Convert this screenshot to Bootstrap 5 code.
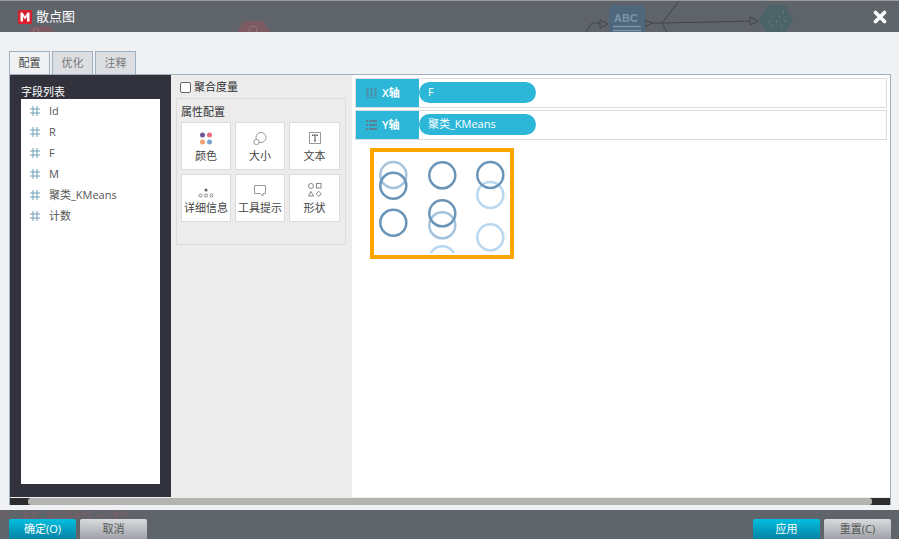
<!DOCTYPE html>
<html>
  <head>
    <title>散点图</title>
    <link href="https://cdn.jsdelivr.net/npm/bootstrap@5.3.2/dist/css/bootstrap.min.css" rel="stylesheet">
    <style>
      html, body { height: 539px; overflow: hidden; }
      body { font-family: "Open Sans", "Noto Sans CJK SC", sans-serif; font-size: 11px; color: #333; background: #5f646b; }
      .dlg { width: 899px; height: 539px; }
      .dlg-head { height: 32px; background: #5f646b; border-top: 1px solid #9a9b9c; color: #fff; font-size: 13px; position: relative; overflow: hidden; padding-left: 18px; }
      .dlg-logo { width: 14px; height: 14px; margin-right: 4px; }
      .dlg-close { position: absolute; right: 12px; top: 9px; }
      .bg-flow { position: absolute; left: 0; top: 0; }
      .bg-flow text { font-family: "Liberation Sans", sans-serif; font-size: 11px; font-weight: 700; fill: #7d95a6; }
      .dlg-body { height: 478px; background: #f0f1f3; padding: 19px 8px 5px 9px; }
      .tab-row { height: 23px; gap: 2px; }
      .tab-item { width: 41px; height: 23px; border: 1px solid #9fb0c0; border-bottom: 0; background: #dcdee2; color: #777; text-align: center; line-height: 22px; }
      .tab-item.on { background: #f0f1f3; color: #444; }
      .tab-panel { height: 431px; border: 1px solid #9fb0c0; background: #fff; }
      .panel-main { height: 422px; }
      .field-side { width: 161px; background: #32323c; padding: 0 11px 13px 11px; }
      .field-title { color: #fff; height: 24px; padding-top: 9px; line-height: 15px; }
      .field-list { background: #fff; padding-top: 1px; }
      .field-row { height: 21px; line-height: 21px; color: #555; padding-left: 9px; gap: 9px; }
      .field-row svg { flex: none; }
      .attr-side { width: 181px; background: #ececec; padding: 0 6px 0 5px; }
      .agg-line { height: 23px; gap: 3px; color: #333; padding-top: 2px; }
      .agg-box { width: 11px; height: 11px; border: 1px solid #666; border-radius: 2px; background: #fff; margin-left: 4px; }
      .attr-box { height: 147px; border: 1px solid #dcdcdc; padding: 4px 4px 0 4px; }
      .attr-title { height: 19px; line-height: 18px; }
      .attr-grid { display: grid; grid-template-columns: 50px 50px 51px; column-gap: 4px; row-gap: 4px; }
      .attr-btn { height: 48px; background: #fff; border: 1px solid #dcdcdc; gap: 2px; white-space: nowrap; color: #444; padding-top: 2px; }
      .attr-btn svg { height: 16px; }
      .chart-side { flex: 1; padding: 3px 3px 0 3px; min-width: 0; }
      .axis-row { height: 30px; border: 1px solid #dcdcdc; margin-bottom: 2px; }
      .axis-tag { width: 63px; height: 28px; background: #2cb6d8; color: #fff; padding-left: 10px; gap: 5px; font-weight: 600; }
      .axis-pill { width: 117px; height: 21px; border-radius: 11px; background: #2cb6d8; color: #fff; padding-left: 9px; line-height: 20px; margin-top: 3px; }
      .plot-frame { width: 144px; height: 111px; border: 4px solid #ffa500; margin: 8px 0 0 15px; overflow: hidden; }
      .scroll-track { height: 8px; background: #2d2d30; padding: 0 18px 0 18px; border-top: 1px solid #eee; }
      .scroll-thumb { height: 7px; background: #b3b3b0; border-radius: 3px; }
      .dlg-foot { height: 29px; background: #5f646b; padding: 9px 8px 0 9px; position: relative; }
      .foot-ghost { position: absolute; left: 0; top: 0; color: #7c5f66; font-size: 9px; line-height: 9px; white-space: nowrap; }
      .act-btn { position: relative; width: 67px; height: 20px; border: 0; border-radius: 2px 2px 0 0; font-size: 11px; line-height: 20px; text-align: center; padding: 0; }
      .act-blue { background: linear-gradient(#03bfe0, #0583a4); color: #fff; }
      .act-gray { background: linear-gradient(#d9dadd, #9ea2a8); color: #555; }
    </style>
  </head>
  <body>
    <div class="dlg d-flex flex-column">
      <div class="dlg-head d-flex align-items-center">
        <svg class="bg-flow" width="899" height="32" viewBox="0 0 899 32">
          <path d="M585 32l7-10h8M645 22h17l5 10M662 22l17-22M662 22l94-2" fill="none" stroke="#41454b" stroke-width="1"/>
          <path d="M600 19l8 4-8 4zM645 19l7 3-7 4zM750 16l8 4-8 4z" fill="#5f646b" stroke="#41454b"/>
          <rect x="609" y="4" width="36" height="30" rx="4" fill="#4e677c"/>
          <text x="614" y="21">ABC</text>
          <path d="M613 25.500h28M613 29.500h28" stroke="#7d95a6" stroke-width="1.500"/>
          <path d="M759 18l9-14h17l8 14-8 16h-17z" fill="#4c6468"/>
          <path d="M783 11h1M772 15h1M779 16h1M769 21h1M776 21h1M785 20h1M771 25h1M781 25h1" stroke="#6f8789" stroke-width="1.500"/>
          <path d="M27 32l6-7h16l6 7zM236 32l8-12h19l8 12z" fill="#7b5a61"/>
          <circle cx="36" cy="30" r="3" fill="none" stroke="#93757b"/>
          <circle cx="253" cy="29" r="4" fill="none" stroke="#93757b"/>
        </svg>
        <svg class="dlg-logo position-relative" viewBox="0 0 14 14"><rect width="14" height="14" rx="1.500" fill="#d8202f"/><path d="M2.500 11.500V2.500h2l2.500 4 2.500-4h2v9H9V6.500L7 9.500 5 6.500v5z" fill="#fff"/></svg>
        <span class="position-relative">散点图</span>
        <svg class="dlg-close" width="14" height="14" viewBox="0 0 14 14"><path d="M2.500 2.500l9 9M11.500 2.500l-9 9" stroke="#fff" stroke-width="3.600" stroke-linecap="round"/></svg>
      </div>
      <div class="dlg-body">
        <div class="tab-row d-flex">
          <div class="tab-item on">配置</div>
          <div class="tab-item">优化</div>
          <div class="tab-item">注释</div>
        </div>
        <div class="tab-panel">
          <div class="panel-main d-flex">
            <div class="field-side d-flex flex-column">
              <div class="field-title">字段列表</div>
              <div class="field-list flex-grow-1" id="fieldList"></div>
            </div>
            <div class="attr-side">
              <div class="agg-line d-flex align-items-center"><span class="agg-box"></span><span>聚合度量</span></div>
              <div class="attr-box">
                <div class="attr-title">属性配置</div>
                <div class="attr-grid">
                  <div class="attr-btn d-flex flex-column align-items-center justify-content-center">
                    <svg width="16" viewBox="0 0 16 16"><circle cx="4.500" cy="5" r="2.500" fill="#6f5b93"/><circle cx="11.500" cy="5" r="2.500" fill="#f06a80"/><circle cx="4.500" cy="12" r="2.500" fill="#f0a070"/><circle cx="11.500" cy="12" r="2.500" fill="#7aa5d2"/></svg>
                    <span>颜色</span>
                  </div>
                  <div class="attr-btn d-flex flex-column align-items-center justify-content-center">
                    <svg width="16" viewBox="0 0 16 16"><circle cx="9" cy="7.500" r="5" fill="#fff" stroke="#999"/><circle cx="4.500" cy="12" r="2.700" fill="#fff" stroke="#999"/></svg>
                    <span>大小</span>
                  </div>
                  <div class="attr-btn d-flex flex-column align-items-center justify-content-center">
                    <svg width="16" viewBox="0 0 16 16"><rect x="2.500" y="2.500" width="11" height="11" fill="#fff" stroke="#999"/><path d="M5.500 6V5h5v1M8 5v6M7 11h2" fill="none" stroke="#555"/></svg>
                    <span>文本</span>
                  </div>
                  <div class="attr-btn d-flex flex-column align-items-center justify-content-center">
                    <svg width="16" viewBox="0 0 16 16"><circle cx="8" cy="8" r="1.600" fill="#666"/><circle cx="2.500" cy="13.500" r="1.500" fill="none" stroke="#888"/><circle cx="8" cy="13.500" r="1.500" fill="none" stroke="#888"/><circle cx="13.500" cy="13.500" r="1.500" fill="none" stroke="#888"/></svg>
                    <span>详细信息</span>
                  </div>
                  <div class="attr-btn d-flex flex-column align-items-center justify-content-center">
                    <svg width="16" viewBox="0 0 16 16"><path d="M2.500 3.500h11v8h-2.500v2.500l-2.500-2.500h-6z" fill="#fff" stroke="#999"/></svg>
                    <span>工具提示</span>
                  </div>
                  <div class="attr-btn d-flex flex-column align-items-center justify-content-center">
                    <svg width="16" viewBox="0 0 16 16"><circle cx="4" cy="4" r="2.500" fill="#fff" stroke="#888"/><rect x="9.500" y="1.500" width="4.500" height="4.500" fill="#fff" stroke="#888"/><path d="M4 9.500l2.500 4.500h-5z" fill="#fff" stroke="#888"/><path d="M11.700 9.300l2.600 2.500-2.600 2.500-2.600-2.500z" fill="#fff" stroke="#888"/></svg>
                    <span>形状</span>
                  </div>
                </div>
              </div>
            </div>
            <div class="chart-side">
              <div class="axis-row d-flex">
                <div class="axis-tag d-flex align-items-center">
                  <svg width="11" height="12" viewBox="0 0 11 12"><path d="M1.500 1v10M5.500 1v10M9.500 1v10" stroke="#5a8294" stroke-width="2" stroke-dasharray="1.500 .7"/></svg>
                  <span>X轴</span>
                </div>
                <div class="axis-pill">F</div>
              </div>
              <div class="axis-row d-flex">
                <div class="axis-tag d-flex align-items-center">
                  <svg width="11" height="12" viewBox="0 0 11 12"><path d="M0 2h2M3 2h8M0 6h2M3 6h8M0 10h2M3 10h8" stroke="#5a8294" stroke-width="2"/></svg>
                  <span>Y轴</span>
                </div>
                <div class="axis-pill">聚类_KMeans</div>
              </div>
              <div class="plot-frame">
                <svg class="d-block" width="136" height="101" viewBox="0 0 136 101" id="plot"></svg>
              </div>
            </div>
          </div>
          <div class="scroll-track"><div class="scroll-thumb"></div></div>
        </div>
      </div>
      <div class="dlg-foot d-flex justify-content-between">
        <div class="foot-ghost">秒,&nbsp;&nbsp;&nbsp;&nbsp;毫秒&nbsp;&nbsp;&nbsp;服务器耗时: 471毫秒</div>
        <div class="d-flex gap-1">
          <button class="act-btn act-blue">确定(O)</button>
          <button class="act-btn act-gray">取消</button>
        </div>
        <div class="d-flex gap-1">
          <button class="act-btn act-blue">应用</button>
          <button class="act-btn act-gray">重置(C)</button>
        </div>
      </div>
    </div>
    <script>
      const fields = ["Id", "R", "F", "M", "聚类_KMeans", "计数"];
      const fieldList = document.querySelector("#fieldList");
      for (let i = 0; i < fields.length; i++) {
        const row = document.createElement("div");
        row.className = "field-row d-flex align-items-center";
        row.innerHTML = '<svg width="10" height="10" viewBox="0 0 10 10"><path d="M3 0v10M7 0v10M0 3h10M0 7h10" stroke="#6fa0b8" stroke-width="1"/></svg><span>' + fields[i] + '</span>';
        fieldList.appendChild(row);
      }

      // light rings first so the dark ones sit on top
      const rings = [
        [19.3, 23, "#a5c3dc"], [68.3, 73.3, "#a5c3dc"], [116.3, 43, "#b9d8f0"],
        [116.3, 85.3, "#b9d8f0"], [68.3, 107.3, "#b9d8f0"],
        [19.3, 33.7, "#6a95b8"], [19.3, 70.7, "#6a95b8"], [68.3, 23.3, "#6a95b8"], [116.3, 23, "#6a95b8"], [68.3, 61.3, "#6a95b8"]
      ];
      const plot = document.querySelector("#plot");
      let rows = "";
      for (let i = 0; i < rings.length; i++) {
        rows += '<circle cx="' + rings[i][0] + '" cy="' + rings[i][1] + '" r="13" fill="none" stroke="' + rings[i][2] + '" stroke-width="2.500"/>';
      }
      plot.innerHTML = rows;
    </script>
    <script src="https://cdn.jsdelivr.net/npm/bootstrap@5.3.2/dist/js/bootstrap.bundle.min.js"></script>
  </body>
</html>
